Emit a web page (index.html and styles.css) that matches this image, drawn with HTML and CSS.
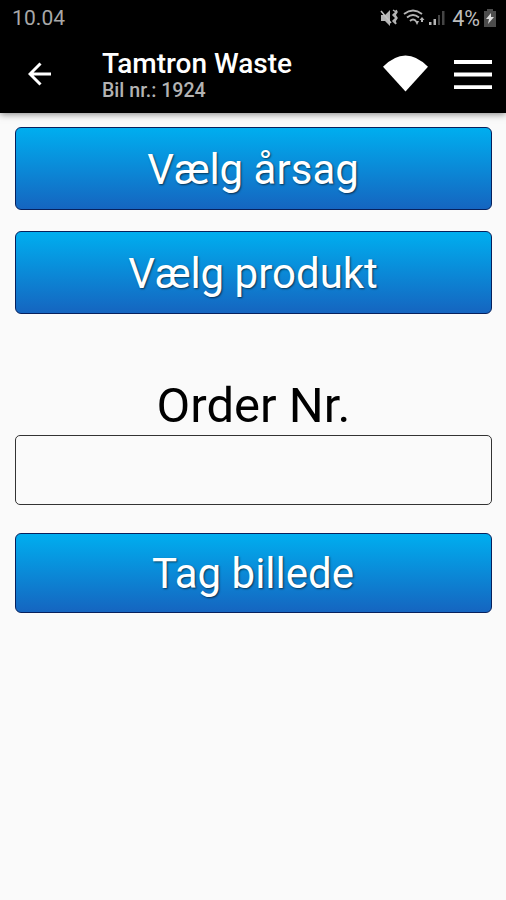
FILE: index.html
```html
<!DOCTYPE html>
<html lang="da">
<head>
<meta charset="utf-8">
<title>Tamtron Waste</title>
<link rel="stylesheet" href="styles.css">
</head>
<body>
<header class="top">
  <div class="status">
    <span class="clock">10.04</span>
    <svg class="status-icons" width="68" height="20" viewBox="0 0 68 20">
      <path fill="#b5b5b5" d="M1 7h4l5-5v16l-5-5H1z"/>
      <path d="M1 3l10 12" stroke="#c4c4c4" stroke-width="1.500"/>
      <path d="M13 2l3 2-3 3 3 3-3 3 3 3M16 2l1 2-2 3 2 3-2 3 1 3" fill="none" stroke="#b5b5b5" stroke-width="1.500"/>
      <path d="M24 6q9-7 18 0M27 9.500q6-5 12 0M30 13q3-3 6 0" fill="none" stroke="#b5b5b5" stroke-width="1.800"/>
      <path fill="#b5b5b5" d="M35 13h4l-2 4zM41 14v-2h-1.500l2.500-3 2.500 3H43v2z"/>
      <path fill="#b5b5b5" d="M49 14h2.500v3H49zM53.500 11H56v6h-2.500z"/>
      <path fill="#454545" d="M58 7h2v10h-2zM62 3h2.500v14H62z"/>
    </svg>
    <span class="percent">4%</span>
    <svg class="battery" width="12" height="18" viewBox="0 0 12 18">
      <path fill="#4c4c4c" d="M3 2V0h6v2h3v16H0V2z"/>
      <path fill="#ddd" d="M7 4L2 10h3l-1 5 6-7H7z"/>
    </svg>
  </div>
  <div class="appbar">
    <svg class="back" width="24" height="24" viewBox="0 0 24 24">
      <path d="M23 12H2M12.500 1.500L2 12l10.500 10.500" fill="none" stroke="#fff" stroke-width="3"/>
    </svg>
    <div class="titles">
      <h1 class="title">Tamtron Waste</h1>
      <p class="subtitle">Bil nr.: 1924</p>
    </div>
    <svg class="signal" width="45" height="37" viewBox="0 0 46 37">
      <path fill="#fff" d="M0 11.500Q23-11.500 46 11.500L23 37z"/>
    </svg>
    <svg class="menu" width="38" height="30" viewBox="0 0 38 30">
      <path d="M0 2h38M0 14.500h38M0 27.200h38" stroke="#fff" stroke-width="3.800"/>
    </svg>
  </div>
</header>
<main class="content">
  <button class="button reason">Vælg årsag</button>
  <button class="button product">Vælg produkt</button>
  <label class="label" for="order">Order Nr.</label>
  <input class="field" id="order" type="text">
  <button class="button photo">Tag billede</button>
</main>
</body>
</html>
```
FILE: styles.css
```css
* { box-sizing: border-box; }
body {
  margin: 0;
  min-height: 900px;
  background: #fafafa;
  font-family: Roboto, "Liberation Sans", sans-serif;
}
.top {
  height: 113px;
  background: #000;
  box-shadow: 0 1px 7px rgba(0, 0, 0, .5);
}
.status {
  display: flex;
  align-items: center;
  height: 36px;
  padding: 0 10px 0 12px;
  color: #a8a8a8;
  font-size: 21px;
}
.clock { letter-spacing: .1px; }
.status-icons { margin-left: auto; }
.percent {
  margin: 0 4px 0 4px;
  color: #bdbdbd;
  font-size: 21.500px;
  letter-spacing: -.1px;
}
.appbar {
  display: flex;
  align-items: center;
  height: 77px;
  padding: 0 14px 0 28px;
}
.back { margin-top: -2px; }
.titles { margin: 2px auto 0 50px; }
.title {
  margin: 0;
  color: #fff;
  font-size: 28px;
  font-weight: 500;
  line-height: 30px;
}
.subtitle {
  margin: 0;
  color: #b3b3b3;
  font-size: 19.600px;
  font-weight: 500;
  line-height: 24px;
}
.signal { margin-right: 26px; margin-top: -2px; }
.content {
  display: flex;
  flex-direction: column;
  padding: 14px 14px 0 15px;
}
.button {
  height: 83px;
  padding: 1px 1px 0 0;
  border: 1.500px solid #07205c;
  border-radius: 6px;
  background: linear-gradient(#00aeef, #1565c0);
  color: #fff;
  font-family: inherit;
  font-size: 42px;
  text-shadow: 1px 1px 2px rgba(0, 0, 0, .6);
}
.product { margin-top: 21px; }
.label {
  margin-top: 63px;
  height: 58px;
  color: #000;
  font-size: 49px;
  line-height: 58px;
  text-align: center;
}
.field {
  height: 70px;
  border: 1px solid #333;
  border-radius: 5px;
  background: transparent;
}
.photo {
  height: 80px;
  margin-top: 28px;
}
```
